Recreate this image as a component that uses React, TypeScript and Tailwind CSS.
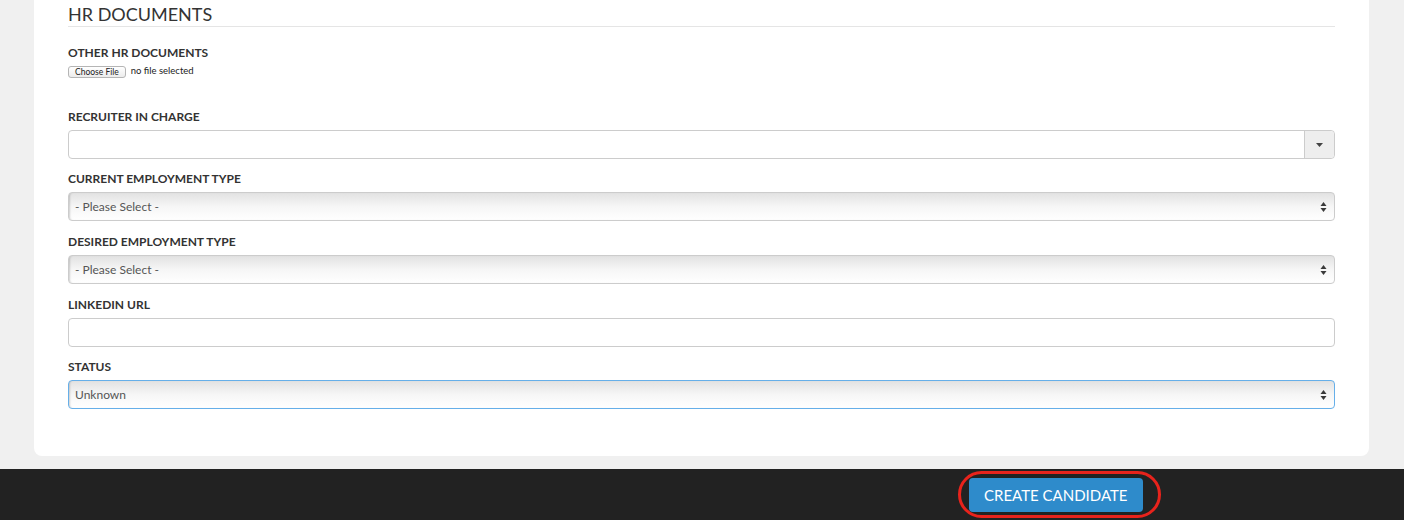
const labelCls =
  "block text-[12px] leading-[17px] font-bold uppercase text-[#333] mb-[5px]";

function SelectArrows() {
  return (
    <svg width="7" height="11" viewBox="0 0 7 11" className="absolute right-[7px] top-1/2 -translate-y-1/2">
      <path d="M3.5 0.5 L6.5 4.5 H0.5 Z" fill="#3a3a3a" />
      <path d="M3.5 10.5 L6.5 6.5 H0.5 Z" fill="#3a3a3a" />
    </svg>
  );
}

function FakeSelect({ value, focused }: { value: string; focused?: boolean }) {
  return (
    <div
      className={`relative h-[29px] rounded-[4px] border bg-gradient-to-b from-[#e2e2e2] via-[#f6f6f6] to-white text-[12px] leading-[27px] text-[#555] pl-[6px] shadow-[inset_2px_0_2px_-1px_rgba(0,0,0,0.18)] ${
        focused
          ? "border-[#66afe9] shadow-[0_0_2px_rgba(102,175,233,0.6)]"
          : "border-[#ccc]"
      }`}
    >
      {value}
      <SelectArrows />
    </div>
  );
}

export default function App() {
  return (
    <div className="min-h-[520px] bg-[#f0f0f0] font-['Lato','Open_Sans',sans-serif]">
      {/* Form card */}
      <div className="ml-[34px] mr-[35px] rounded-b-[8px] bg-white px-[34px] pb-[47px]">
        <h2 className="pt-[2px] text-[18px] leading-[24px] font-normal text-[#333] border-b border-[#e5e5e5]">
          HR DOCUMENTS
        </h2>

        {/* Other HR documents */}
        <div className="pt-[17px] h-[81px]">
          <label className={labelCls}>Other HR Documents</label>
          <div className="flex items-center gap-[5px]">
            <span className="inline-flex h-[12px] items-center rounded-[3px] border border-[#b5b5b5] bg-gradient-to-b from-white to-[#ececec] px-[6px] text-[8.5px] leading-none text-[#222]">
              Choose File
            </span>
            <span className="-mt-[3px] text-[9.5px] leading-none text-[#222]">no file selected</span>
          </div>
        </div>

        <div className="flex flex-col">
          {/* Recruiter */}
          <div>
            <label className={labelCls}>Recruiter in Charge</label>
            <div className="flex h-[29px] rounded-[4px] border border-[#ccc] bg-white">
              <div className="flex-1" />
              <div className="flex w-[30px] items-center justify-center rounded-r-[4px] border-l border-[#ccc] bg-[#eee]">
                <svg width="7" height="4" viewBox="0 0 7 4">
                  <path d="M0 0 H7 L3.5 4 Z" fill="#444" />
                </svg>
              </div>
            </div>
          </div>

          <div className="mt-[11px]">
            <label className={labelCls}>Current Employment Type</label>
            <FakeSelect value="- Please Select -" />
          </div>

          <div className="mt-[12px]">
            <label className={labelCls}>Desired Employment Type</label>
            <FakeSelect value="- Please Select -" />
          </div>

          <div className="mt-[12px]">
            <label className={labelCls}>LinkedIn URL</label>
            <div className="h-[29px] rounded-[4px] border border-[#ccc] bg-white" />
          </div>

          <div className="mt-[11px]">
            <label className={labelCls}>Status</label>
            <FakeSelect value="Unknown" focused />
          </div>
        </div>
      </div>

      {/* Footer action bar */}
      <div className="mt-[13px] h-[51px] bg-[#222] pl-[969px] pt-[9px]">
        <div className="relative inline-block">
          <button
            type="button"
            className="h-[34px] rounded-[4px] bg-[#2e8bcb] px-[15px] text-[15px] leading-[34px] text-white"
          >
            CREATE CANDIDATE
          </button>
          <span className="pointer-events-none absolute -left-[11px] -right-[18px] -top-[7px] -bottom-[6px] rounded-full border-[3px] border-[#e8231c]" />
        </div>
      </div>
    </div>
  );
}
